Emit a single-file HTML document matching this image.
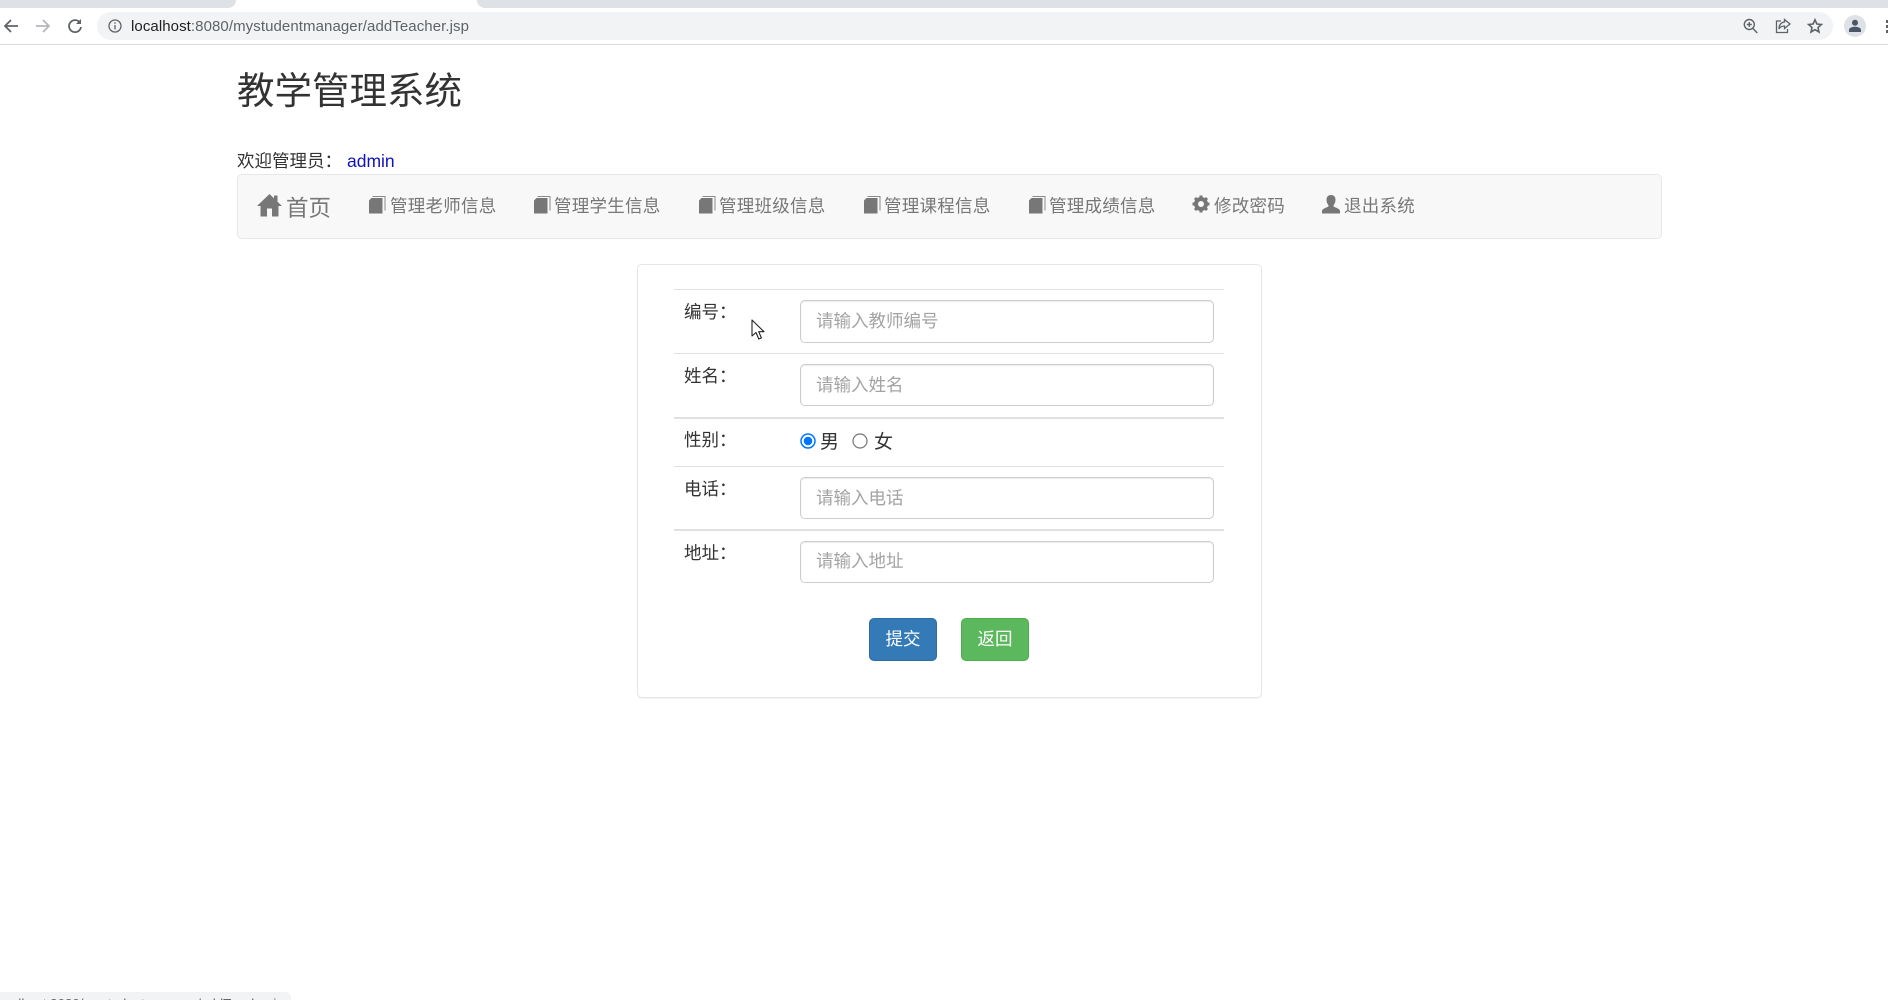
<!DOCTYPE html>
<html lang="zh">
<head>
<meta charset="utf-8">
<title>教学管理系统</title>
<style>
html,body{margin:0;padding:0;background:#fff;width:1888px;height:1000px;overflow:hidden}
body{position:relative;font-family:"Liberation Sans","Noto Sans CJK SC",sans-serif;color:#333;font-size:17.5px}
.a{position:absolute;white-space:nowrap}
.t{line-height:26px;height:26px}
.nav{color:#777;letter-spacing:.25px}
.line{position:absolute;left:674px;width:550px;background:#e0e0e0;height:1px}
.inp{position:absolute;left:800px;width:412px;border:1px solid #ccc;border-radius:5px;box-shadow:inset 0 1px 1px rgba(0,0,0,.075);background:#fff;box-sizing:content-box}
.ph{position:absolute;left:816px;color:#a3a3a3;line-height:26px;white-space:nowrap}
.btn{position:absolute;top:618px;height:43px;line-height:40px;border-radius:5px;color:#fff;text-align:center;box-sizing:border-box}
svg{position:absolute;display:block}
</style>
</head>
<body>
<!-- browser chrome -->
<div class="a" style="left:0;top:0;width:236px;height:8px;background:#dee1e6;border-bottom-right-radius:8px"></div>
<div class="a" style="left:477px;top:0;width:1411px;height:8px;background:#dee1e6;border-bottom-left-radius:8px"></div>
<div class="a" style="left:0;top:44px;width:1888px;height:1px;background:#dadce0"></div>
<div class="a" style="left:97px;top:12px;width:1736px;height:28px;background:#f1f3f4;border-radius:14px"></div>
<svg style="left:3px;top:18px" width="16" height="16" viewBox="0 0 16 16" fill="none" stroke="#5f6368" stroke-width="1.8"><path d="M15 8H2M8 2L2 8l6 6"/></svg>
<svg style="left:35px;top:18px" width="16" height="16" viewBox="0 0 16 16" fill="none" stroke="#b4b6b9" stroke-width="1.8"><path d="M1 8h13M8 2l6 6-6 6"/></svg>
<svg style="left:67px;top:18px" width="16" height="16" viewBox="0 0 16 16" fill="none" stroke="#5f6368" stroke-width="1.8"><path d="M13.2 5A6 6 0 1 0 14 9"/><path d="M14 1v5H9" fill="#5f6368" stroke="none"/></svg>
<svg style="left:108px;top:19px" width="14" height="14" viewBox="0 0 14 14" fill="none" stroke="#5f6368" stroke-width="1.3"><circle cx="7" cy="7" r="6"/><path d="M7 6v4.500M7 3.300v1.500"/></svg>
<div class="a" style="left:131px;top:17px;line-height:20px;font-size:15px;color:#5f6368;letter-spacing:.08px"><span style="color:#202124">localhost</span>:8080/mystudentmanager/addTeacher.jsp</div>
<svg style="left:1743px;top:18px" width="15" height="16" viewBox="0 0 15 16" fill="none" stroke="#5f6368" stroke-width="1.4"><circle cx="6.300" cy="6.500" r="5"/><path d="M10 10.500l4.300 4.500M6.300 4v5M3.800 6.500h5"/></svg>
<svg style="left:1775px;top:18px" width="16" height="16" viewBox="0 0 16 16" fill="none" stroke="#5f6368" stroke-width="1.3"><path d="M6 3H1.500v11.500h11V11"/><path d="M9.500 1.500L15 6l-5.500 4.500V8C7 8 5 9 4 11c0-4 2-6.500 5.500-7z"/></svg>
<svg style="left:1807px;top:18px" width="16" height="16" viewBox="0 0 16 16" fill="none" stroke="#5f6368" stroke-width="1.6"><path d="M8 1.800l1.900 4.200 4.500.5-3.400 3 1 4.500L8 11.700 4 14l1-4.500-3.400-3 4.500-.5z"/></svg>
<div class="a" style="left:1844px;top:15px;width:22px;height:22px;border-radius:50%;background:#dee1e6"></div>
<svg style="left:1848px;top:19px" width="14" height="14" viewBox="0 0 14 14" fill="#4a5568"><circle cx="7" cy="3.800" r="3"/><path d="M1 13v-2c0-2 3-3.200 6-3.200s6 1.200 6 3.200v2z"/></svg>
<div class="a" style="left:1886px;top:20px;width:2px;height:2.500px;background:#5f6368"></div>
<div class="a" style="left:1886px;top:25px;width:2px;height:2.500px;background:#5f6368"></div>
<div class="a" style="left:1886px;top:30px;width:2px;height:2.500px;background:#5f6368"></div>
<div class="a" style="left:0;top:992px;width:291px;height:8px;background:#f1f3f4;border-top-right-radius:6px;overflow:hidden;font-size:13.3px;line-height:18px;color:#666"><span style="position:absolute;left:-6px;top:3px">localhost:8080/mystudentmanager/addTeacher.jsp</span></div>

<!-- page header -->
<div class="a" style="left:237px;top:64px;font-size:37.5px;line-height:54px">教学管理系统</div>
<div class="a t" style="left:237px;top:148px">欢迎管理员：</div>
<div class="a t" style="left:347px;top:148px;color:#1111b8">admin</div>

<!-- nav -->
<div class="a" style="left:237px;top:174px;width:1425px;height:65px;box-sizing:border-box;background:#f8f8f8;border:1px solid #e7e7e7;border-radius:5px"></div>
<svg style="left:257px;top:193px" width="25" height="24" viewBox="0 0 25 24" fill="#777"><path d="M12.500 1L0 13h3.500v10.500h6.500V15.500h5v8h6.500V13H25L20.500 8.700V2.500h-3.500v2.900z"/></svg>
<div class="a nav" style="left:286px;top:192px;font-size:22.5px;line-height:34px;letter-spacing:0">首页</div>

<svg style="left:369px;top:196px" width="17" height="18" viewBox="0 0 17 18"><path d="M2.500 2H13.500V17.500H0V4.500z" fill="#777"/><path d="M3.500 .5H16V14.500" fill="none" stroke="#8a8a8a" stroke-width="1"/></svg>
<div class="a nav t" style="left:390px;top:193px">管理老师信息</div>
<svg style="left:534px;top:196px" width="17" height="18" viewBox="0 0 17 18"><path d="M2.500 2H13.500V17.500H0V4.500z" fill="#777"/><path d="M3.500 .5H16V14.500" fill="none" stroke="#8a8a8a" stroke-width="1"/></svg>
<div class="a nav t" style="left:554px;top:193px">管理学生信息</div>
<svg style="left:699px;top:196px" width="17" height="18" viewBox="0 0 17 18"><path d="M2.500 2H13.500V17.500H0V4.500z" fill="#777"/><path d="M3.500 .5H16V14.500" fill="none" stroke="#8a8a8a" stroke-width="1"/></svg>
<div class="a nav t" style="left:719px;top:193px">管理班级信息</div>
<svg style="left:864px;top:196px" width="17" height="18" viewBox="0 0 17 18"><path d="M2.500 2H13.500V17.500H0V4.500z" fill="#777"/><path d="M3.500 .5H16V14.500" fill="none" stroke="#8a8a8a" stroke-width="1"/></svg>
<div class="a nav t" style="left:884px;top:193px">管理课程信息</div>
<svg style="left:1029px;top:196px" width="17" height="18" viewBox="0 0 17 18"><path d="M2.500 2H13.500V17.500H0V4.500z" fill="#777"/><path d="M3.500 .5H16V14.500" fill="none" stroke="#8a8a8a" stroke-width="1"/></svg>
<div class="a nav t" style="left:1049px;top:193px">管理成绩信息</div>
<svg style="left:1192px;top:195px" width="18" height="18" viewBox="0 0 18 18"><circle cx="9" cy="9" r="5" fill="none" stroke="#777" stroke-width="4"/><g stroke="#777" stroke-width="3"><path d="M9 .5v17M.5 9h17M3 3l12 12M15 3L3 15"/></g><circle cx="9" cy="9" r="3" fill="#f8f8f8"/></svg>
<div class="a nav t" style="left:1214px;top:193px">修改密码</div>
<svg style="left:1322px;top:195px" width="18" height="19" viewBox="0 0 18 19"><path fill="#777" d="M9 0c3 0 4.500 2 4.500 4.800 0 2.200-.8 4-1.800 5.200-.4.600-.3 1.300.3 1.700 2 1 5.500 2 6 4V18.500H0V15.700c.5-2 4-3 6-4 .6-.4.700-1.100.3-1.700C5.300 8.800 4.500 7 4.500 4.800 4.500 2 6 0 9 0z"/></svg>
<div class="a nav t" style="left:1344px;top:193px">退出系统</div>

<!-- form panel -->
<div class="a" style="left:637px;top:264px;width:625px;height:434px;box-sizing:border-box;border:1px solid #e6e6e6;border-radius:5px;box-shadow:0 1px 1px rgba(0,0,0,.05)"></div>
<div class="line" style="top:289px"></div>
<div class="line" style="top:353px"></div>
<div class="line" style="top:417px;height:2px"></div>
<div class="line" style="top:466px"></div>
<div class="line" style="top:529px;height:2px"></div>

<div class="a t" style="left:684px;top:299px">编号：</div>
<div class="a t" style="left:684px;top:363px">姓名：</div>
<div class="a t" style="left:684px;top:427px">性别：</div>
<div class="a t" style="left:684px;top:476px">电话：</div>
<div class="a t" style="left:684px;top:540px">地址：</div>

<div class="inp" style="top:300px;height:41px"></div>
<div class="ph" style="top:308px">请输入教师编号</div>
<div class="inp" style="top:364px;height:40px"></div>
<div class="ph" style="top:372px">请输入姓名</div>
<div class="inp" style="top:477px;height:40px"></div>
<div class="ph" style="top:485px">请输入电话</div>
<div class="inp" style="top:541px;height:40px"></div>
<div class="ph" style="top:548px">请输入地址</div>

<svg style="left:800px;top:433px" width="16" height="16" viewBox="0 0 16 16"><circle cx="8" cy="8" r="7" fill="#fff" stroke="#0075ff" stroke-width="1.500"/><circle cx="8" cy="8" r="4.300" fill="#0075ff"/></svg>
<svg style="left:852px;top:433px" width="16" height="16" viewBox="0 0 16 16"><circle cx="8" cy="8" r="7" fill="#fff" stroke="#767676" stroke-width="1.200"/></svg>
<div class="a t" style="left:820px;top:430px;font-size:19px">男</div>
<div class="a t" style="left:874px;top:430px;font-size:19px">女</div>

<div class="btn" style="left:869px;width:68px;background:#337ab7;border:1px solid #2e6da4">提交</div>
<div class="btn" style="left:961px;width:68px;background:#5cb85c;border:1px solid #4cae4c">返回</div>

<!-- cursor -->
<svg style="left:751px;top:319px" width="14" height="22" viewBox="0 0 14 22"><path d="M1 1v16l4-3.500 2.800 6.500 2.600-1.100L7.700 12.700H13z" fill="#fff" stroke="#222" stroke-width="1.100" stroke-linejoin="round"/></svg>
</body>
</html>
